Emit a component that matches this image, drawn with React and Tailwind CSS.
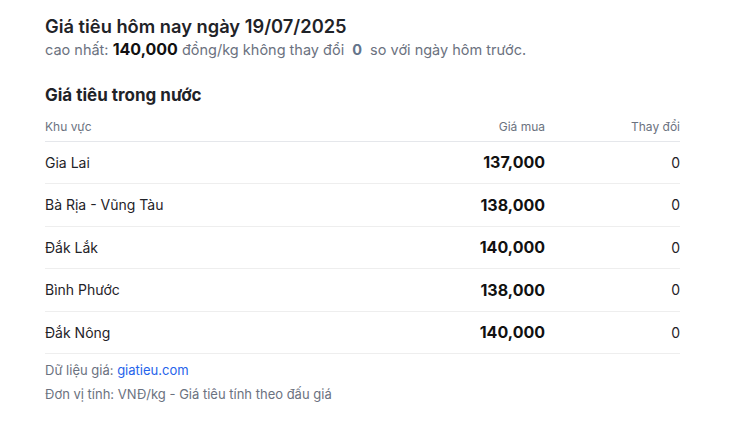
import React from "react";

const rows = [
  { region: "Gia Lai", price: "137,000", change: "0" },
  { region: "Bà Rịa - Vũng Tàu", price: "138,000", change: "0" },
  { region: "Đắk Lắk", price: "140,000", change: "0" },
  { region: "Bình Phước", price: "138,000", change: "0" },
  { region: "Đắk Nông", price: "140,000", change: "0" },
];

const App = () => {
  return (
    <div
      className="min-h-screen bg-white"
      style={{ fontFamily: "Inter, 'Noto Sans', sans-serif" }}
    >
      <div className="ml-[45px] w-[635px] pt-[14px]">
        <h1 className="text-[18.3px] font-semibold leading-[24px] text-[#1f2328]">
          Giá tiêu hôm nay ngày 19/07/2025
        </h1>
        <p className="text-[14.5px] leading-[22px] text-[#6b7280]">
          cao nhất:{" "}
          <span className="text-[16px] font-bold text-[#111]">140,000</span>{" "}
          đồng/kg không thay đổi{" "}
          <span className="mx-[4px] font-bold text-[#64748b]">0</span> so với
          ngày hôm trước.
        </p>

        <h2 className="mt-[22px] text-[17px] font-bold leading-[24px] text-[#1f2328]">
          Giá tiêu trong nước
        </h2>

        <table className="mt-[8px] w-full border-collapse">
          <thead>
            <tr className="border-b border-[#e5e7eb]">
              <th className="h-[26px] pb-[2px] text-left text-[12px] leading-[16px] font-normal text-[#6b7280]">
                Khu vực
              </th>
              <th className="h-[26px] pb-[2px] text-right text-[12px] leading-[16px] font-normal text-[#6b7280]">
                Giá mua
              </th>
              <th className="h-[26px] w-[135px] pb-[2px] text-right text-[12px] leading-[16px] font-normal text-[#6b7280]">
                Thay đổi
              </th>
            </tr>
          </thead>
          <tbody>
            {rows.map((r) => (
              <tr key={r.region} className="border-b border-[#eeeeee]">
                <td className="h-[42.5px] text-[14px] text-[#1f2328]">
                  {r.region}
                </td>
                <td className="h-[42.5px] text-right text-[16px] font-bold text-[#111]">
                  {r.price}
                </td>
                <td className="h-[42.5px] text-right text-[14px] text-[#1f2328]">
                  {r.change}
                </td>
              </tr>
            ))}
          </tbody>
        </table>

        <p className="mt-[6px] text-[13px] leading-[20px] text-[#6b7280]">
          Dữ liệu giá:{" "}
          <a href="#" className="text-[#2563eb]">
            giatieu.com
          </a>
        </p>
        <p className="mt-[4px] text-[13px] leading-[20px] text-[#6b7280]">
          Đơn vị tính: VNĐ/kg - Giá tiêu tính theo đấu giá
        </p>
      </div>
    </div>
  );
};

export default App;
